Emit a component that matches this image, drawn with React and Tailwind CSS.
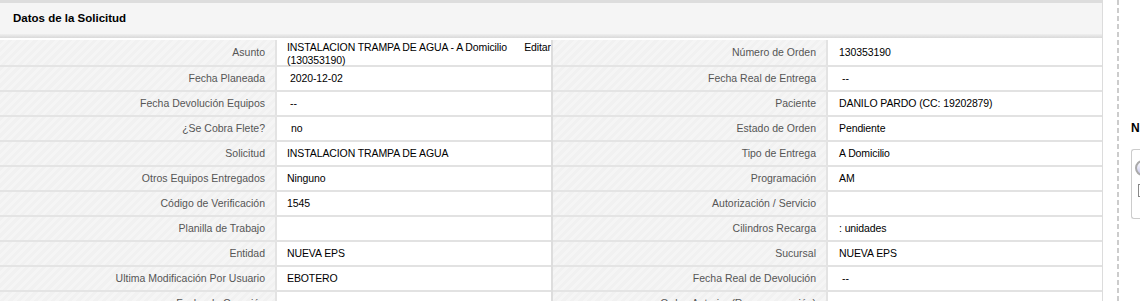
const LEFT = [
  { label: "Fecha Planeada", value: "2020-12-02", pad: "pl-[13px]" },
  { label: "Fecha Devolución Equipos", value: "--", pad: "pl-[13px]" },
  { label: "¿Se Cobra Flete?", value: "no", pad: "pl-[14px]" },
  { label: "Solicitud", value: "INSTALACION TRAMPA DE AGUA" },
  { label: "Otros Equipos Entregados", value: "Ninguno" },
  { label: "Código de Verificación", value: "1545" },
  { label: "Planilla de Trabajo", value: "" },
  { label: "Entidad", value: "NUEVA EPS" },
  { label: "Ultima Modificación Por Usuario", value: "EBOTERO" },
  { label: "Fecha de Creación", value: "" },
];

const RIGHT = [
  { label: "Fecha Real de Entrega", value: "--", pad: "pl-[14px]" },
  { label: "Paciente", value: "DANILO PARDO (CC: 19202879)" },
  { label: "Estado de Orden", value: "Pendiente" },
  { label: "Tipo de Entrega", value: "A Domicilio" },
  { label: "Programación", value: "AM" },
  { label: "Autorización / Servicio", value: "" },
  { label: "Cilindros Recarga", value: ": unidades" },
  { label: "Sucursal", value: "NUEVA EPS" },
  { label: "Fecha Real de Devolución", value: "--", pad: "pl-[14px]" },
  { label: "Orden Anterior (Reprogramación)", value: "" },
];

const stripes =
  "bg-[repeating-linear-gradient(135deg,#f1f1f1_0px,#f1f1f1_3px,#f5f5f5_3px,#f5f5f5_6px)]";

function Label({ children, width, tall }) {
  return (
    <div
      className={`${width} ${tall ? "h-[27px]" : "h-[25px]"} shrink-0 ${stripes} border-b-2 border-r-2 border-b-[#e4e4e4] border-r-[#e3e3e3] flex items-center justify-end pr-[10px] text-[#555555] whitespace-nowrap`}
    >
      {children}
    </div>
  );
}

function Value({ children, pad = "pl-[10px]", tall }) {
  return (
    <div
      className={`w-[274px] ${tall ? "h-[27px]" : "h-[25px]"} shrink-0 bg-white border-b-2 border-[#e2e2e2] flex items-center ${pad} text-black whitespace-nowrap tracking-[-0.1px]`}
    >
      {children}
    </div>
  );
}

export default function App() {
  return (
    <div className="flex w-[1140px] h-[301px] overflow-hidden bg-white font-['Liberation_Sans',Arial,sans-serif] text-[10.5px]">
      {/* Panel */}
      <div className="w-[1103px] shrink-0 border-r border-[#dcdcdc]">
        <div className="h-[3px] bg-[#dddddd]" />
        <div className="h-[31px] bg-[#f5f5f5] flex items-center pl-[13px] text-[11.5px] font-bold text-black">
          Datos de la Solicitud
        </div>
        <div className="h-[4px] bg-gradient-to-b from-[#efefef] to-[#d9d9d9]" />
        <div className="pt-[2px] bg-white">
          {/* first row */}
          <div className="flex">
            <Label width="w-[277px]" tall>Asunto</Label>
            <div className="w-[274px] h-[27px] shrink-0 bg-white border-b-2 border-[#e2e2e2] pl-[10px] pt-[1px] leading-[13px] text-black whitespace-nowrap tracking-[-0.1px]">
              <div className="flex justify-between">
                <span>INSTALACION TRAMPA DE AGUA - A Domicilio</span>
                <span>Editar</span>
              </div>
              <div>(130353190)</div>
            </div>
            <div className="w-[2px] shrink-0 bg-[#dddddd]" />
            <Label width="w-[275px]" tall>Número de Orden</Label>
            <Value tall pad="pl-[11px]">130353190</Value>
          </div>
          {LEFT.map((l, i) => {
            const r = RIGHT[i];
            return (
              <div key={l.label} className="flex">
                <Label width="w-[277px]">{l.label}</Label>
                <Value pad={l.pad}>{l.value}</Value>
                <div className="w-[2px] shrink-0 bg-[#dddddd]" />
                <Label width="w-[275px]">{r.label}</Label>
                <Value pad={r.pad || "pl-[11px]"}>{r.value}</Value>
              </div>
            );
          })}
        </div>
      </div>

      {/* Sidebar */}
      <div className="w-[14px] shrink-0" />
      <div className="w-[2px] shrink-0 h-full bg-[repeating-linear-gradient(to_bottom,#cccccc_0px,#cccccc_5px,transparent_5px,transparent_8px)]" />
      <div className="flex-1 pl-[12px] pt-[121px]">
        <div className="text-[12px] font-bold text-black leading-[14px]">N</div>
        <div className="mt-[14px] h-[70px] border border-r-0 border-[#cccccc] rounded-l-[3px] pl-[3px] pt-[10px]">
          <div className="w-[16px] h-[16px] rounded-full border-2 border-[#aaaaaa] bg-gradient-to-b from-white to-[#c9c9ec]" />
          <div className="mt-[8px] ml-[3px] w-[9px] h-[13px] border border-[#888888] bg-white" />
        </div>
      </div>
    </div>
  );
}
